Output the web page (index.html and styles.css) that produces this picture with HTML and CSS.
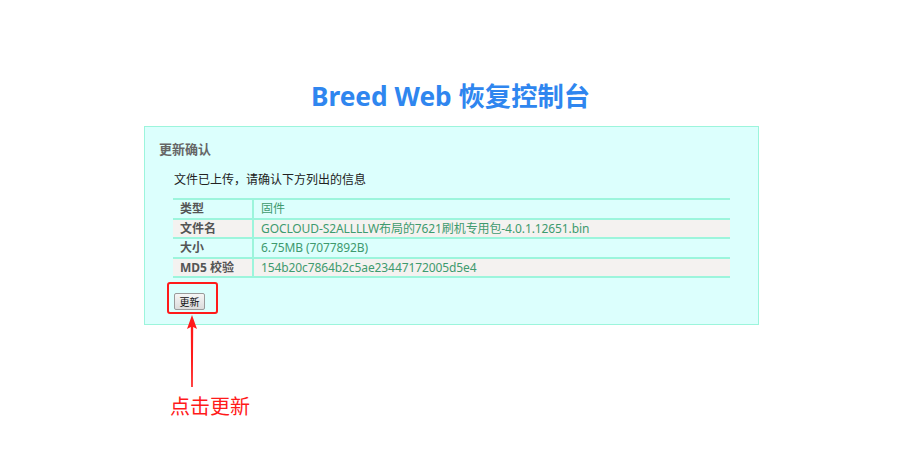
FILE: index.html
```html
<!DOCTYPE html>
<html lang="zh-CN">
<head>
<meta charset="utf-8">
<title>Breed Web 恢复控制台</title>
<link rel="stylesheet" href="styles.css">
</head>
<body>
<div class="page">
  <h1 class="title">Breed Web 恢复控制台</h1>
  <div class="panel">
    <div class="panel-head">更新确认</div>
    <p class="desc">文件已上传，请确认下方列出的信息</p>
    <table class="info">
      <tr><th>类型</th><td>固件</td></tr>
      <tr class="alt"><th>文件名</th><td>GOCLOUD-S2ALLLLW布局的7621刷机专用包-4.0.1.12651.bin</td></tr>
      <tr><th>大小</th><td>6.75MB (7077892B)</td></tr>
      <tr class="alt"><th>MD5 校验</th><td>154b20c7864b2c5ae23447172005d5e4</td></tr>
    </table>
    <div class="actions">
      <button class="btn" type="button">更新</button>
      <span class="mark"></span>
      <svg class="arrow" width="20" height="72" viewBox="0 0 20 72">
        <path d="M10 0 L15 14 L11.2 12 L10.8 72 L9.2 72 L8.8 12 L5 14 Z" fill="#ff1a1a"/>
      </svg>
      <span class="hint">点击更新</span>
    </div>
  </div>
</div>
</body>
</html>
```
FILE: styles.css
```css
html, body {
  margin: 0;
  padding: 0;
  background: #fff;
}
body {
  font-family: "Noto Sans", "Noto Sans CJK SC", sans-serif;
  width: 900px;
  height: 459px;
  overflow: hidden;
}
.page {
  display: flex;
  flex-direction: column;
  align-items: center;
  padding-top: 77px;
}
.title {
  margin: 0 0 0 1px;
  font-size: 26.3px;
  line-height: 38px;
  font-weight: bold;
  color: #2f86ef;
}
.panel {
  margin-top: 11px;
  margin-left: 3px;
  width: 613px;
  height: 197px;
  box-sizing: content-box;
  border: 1px solid #9cf5dc;
  background: #dcfffd;
  padding: 0;
  position: relative;
}
.panel-head {
  margin: 13px 0 0 14px;
  font-size: 13px;
  line-height: 18px;
  font-weight: bold;
  color: #666;
}
.desc {
  margin: 13px 0 0 29px;
  font-size: 12px;
  line-height: 17px;
  color: #222;
}
.info {
  margin: 10px 0 0 28px;
  width: 557px;
  border-collapse: collapse;
  font-size: 12px;
}
.info tr {
  border-top: 2px solid #9cf5dc;
  border-bottom: 2px solid #9cf5dc;
}
.info th, .info td {
  height: 17.5px;
  padding: 0 7px;
  line-height: 17.5px;
  text-align: left;
  white-space: nowrap;
}
.info th {
  width: 65px;
  font-weight: bold;
  color: #555;
  border-right: 2px solid #9cf5dc;
}
.info td {
  color: #3e9a6e;
  letter-spacing: -0.1px;
}
.info tr.alt {
  background: #f4f2f0;
}
.actions {
  position: relative;
  margin: 11px 0 0 29px;
}
.btn {
  font-family: "Noto Sans CJK SC", sans-serif;
  font-size: 10px;
  line-height: 13px;
  padding: 1px 4px;
  height: 17px;
  width: 31px;
  color: #111;
  background: linear-gradient(#f6f6f6, #dcdcdc);
  border: 1px solid #9a9a9a;
  border-radius: 2px;
}
.mark {
  position: absolute;
  left: -7px;
  top: -7px;
  width: 47px;
  height: 28px;
  border: 2px solid #ff1a1a;
  border-radius: 3px;
}
.arrow {
  position: absolute;
  left: 8px;
  top: 26px;
}
.hint {
  position: absolute;
  left: -4px;
  top: 106px;
  font-size: 20px;
  line-height: 24px;
  color: #ff1a1a;
  white-space: nowrap;
}
```
